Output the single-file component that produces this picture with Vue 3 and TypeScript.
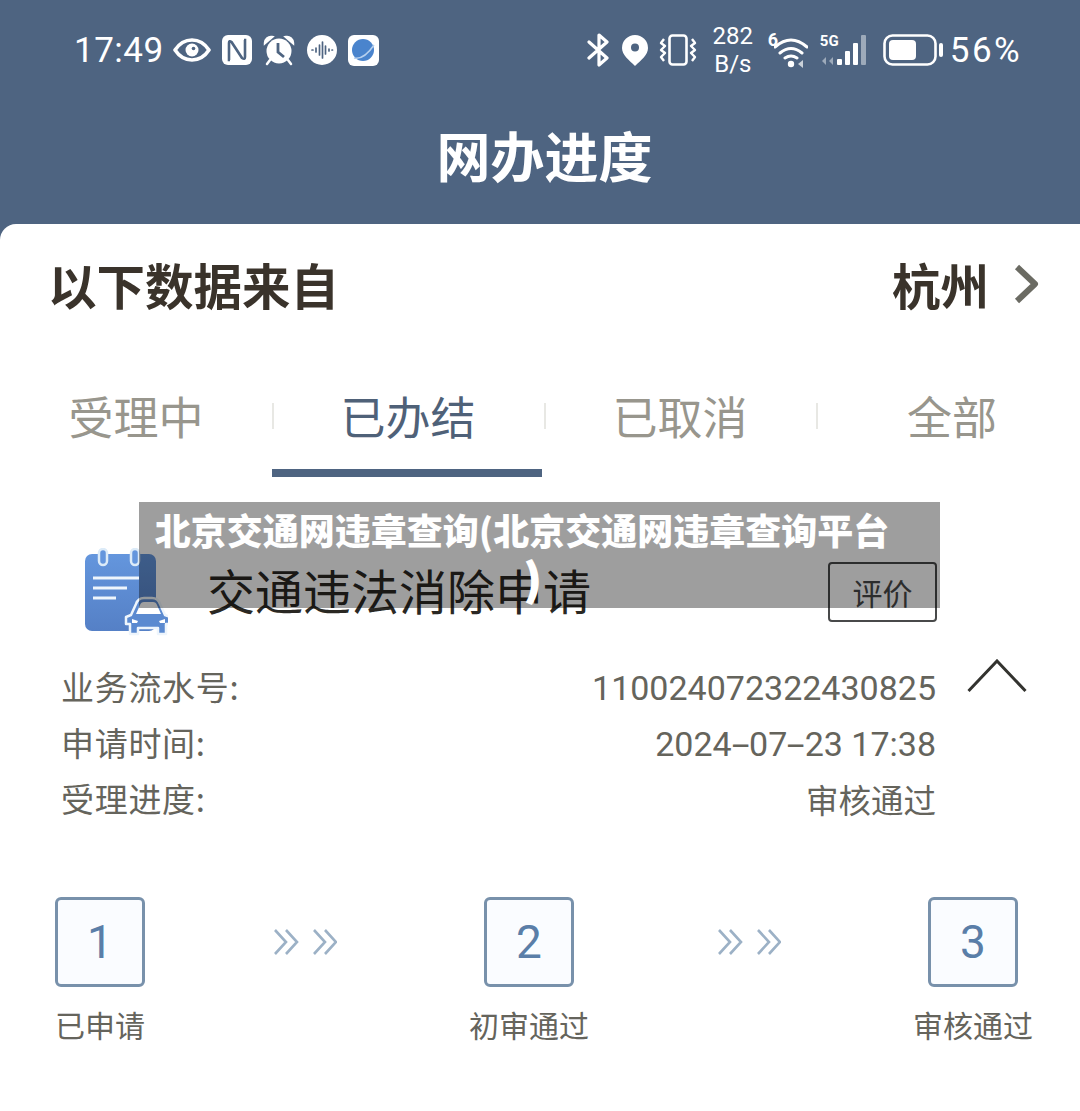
<script setup lang="ts">
const tabs = ['受理中', '已办结', '已取消', '全部']
const rows = [
  { label: '业务流水号:', value: '110024072322430825' },
  { label: '申请时间:', value: '2024-07-23 17:38' },
  { label: '受理进度:', value: '审核通过' },
]
</script>

<template>
  <div class="page">
    <header class="head">
      <div class="status">
        <div class="status-left">
          <span class="time">17:49</span>
          <svg class="i-eye" viewBox="0 0 38 24"><path d="M2 12C7 4.500 13 2 19 2s12 2.500 17 10c-5 7.500-11 10-17 10S7 19.500 2 12Z" fill="none" stroke="#fff" stroke-width="3.600" stroke-linejoin="round"/><circle cx="19" cy="12" r="6.500" fill="#fff"/><circle cx="20.500" cy="10.500" r="1.800" fill="#4e6481"/></svg>
          <svg class="i-nfc" viewBox="0 0 30 30"><rect width="30" height="30" rx="6" fill="#fff"/><path d="M8 25H7V8q0-3 2.500-1L20 23q3 2 3-1V5h-1" fill="none" stroke="#4e6481" stroke-width="2.600"/></svg>
          <svg class="i-alarm" viewBox="0 0 32 32"><circle cx="16" cy="17" r="12.500" fill="#fff"/><path d="M2 9a6 6 0 0 1 7-6zM30 9a6 6 0 0 0-7-6zM7 26l-3 4M25 26l3 4" fill="#fff" stroke="#fff" stroke-width="2.500" stroke-linecap="round"/><path d="M15 9v9l6 5" fill="none" stroke="#4e6481" stroke-width="2.800"/></svg>
          <svg class="i-sound" viewBox="0 0 30 30"><circle cx="15" cy="15" r="15" fill="#fff"/><path d="M5 15h1M9 13v4M12.500 10v10M15.500 7v16M18.500 11v8M22 14v2M25 15h.500" stroke="#4e6481" stroke-width="1.700" stroke-linecap="round"/></svg>
          <svg class="i-browser" viewBox="0 0 31 31"><rect width="31" height="31" rx="6" fill="#fff"/><circle cx="15" cy="15" r="11" fill="#4a84cd"/><path d="M6 23q10 2 20-13" fill="none" stroke="#b7d0ee" stroke-width="1.500"/></svg>
        </div>
        <div class="status-right">
          <svg class="i-bt" viewBox="0 0 24 34"><path d="M2 9l18 16-8 7V2l8 7L2 25" fill="none" stroke="#fff" stroke-width="3.200" stroke-linecap="round" stroke-linejoin="round"/></svg>
          <svg class="i-pin" viewBox="0 0 28 32"><path d="M14 32C8 26 1 21 1 14a13 13 0 0 1 26 0c0 7-7 12-13 18Z" fill="#fff"/><circle cx="14" cy="13.500" r="4" fill="#4e6481"/></svg>
          <svg class="i-vib" viewBox="0 0 38 32"><rect x="10.500" y="1.500" width="17" height="29" rx="3" fill="none" stroke="#fff" stroke-width="2.600"/><path d="M5 5L2 9l4 3-4 4 4 3-4 4 3 4M33 5l3 4-4 3 4 4-4 3 4 4-3 4" fill="none" stroke="#fff" stroke-width="2.400" stroke-linejoin="round"/></svg>
          <div class="speed"><span>282</span><span>B/s</span></div>
          <div class="wifi">
            <span class="six">6</span>
            <svg viewBox="0 0 34 32"><path d="M1 11q16-14 32 0M6 17q11-9 22 0M11 22q6-4 12 0" fill="none" stroke="#fff" stroke-width="3" stroke-linecap="round"/><circle cx="17" cy="28" r="3.200" fill="#fff"/><path d="M24 28l5-4v8z" fill="#fff" opacity=".7"/></svg>
          </div>
          <div class="cell">
            <span class="five">5G</span>
            <svg viewBox="0 0 52 36"><path d="M2 29l4-4v8zM9 29l4-4v8z" fill="#fff" opacity=".45"/><rect x="17" y="27" width="5" height="6" rx="1" fill="#fff"/><rect x="25" y="19" width="5" height="14" rx="1" fill="#fff"/><rect x="33" y="11" width="5" height="22" rx="1" fill="#fff"/><rect x="41" y="3" width="5" height="30" rx="1" fill="#fff" opacity=".45"/></svg>
          </div>
          <svg class="i-bat" viewBox="0 0 60 32"><rect x="1.500" y="1.500" width="51" height="29" rx="8" fill="none" stroke="#fff" stroke-width="2.600"/><rect x="6" y="6" width="27" height="20" rx="4" fill="#fff"/><rect x="56" y="9" width="4" height="14" rx="2" fill="#fff"/></svg>
          <span class="pct">56%</span>
        </div>
      </div>
      <h1 class="head-title">网办进度</h1>
    </header>

    <main class="card">
      <div class="source">
        <span>以下数据来自</span>
        <div class="city">
          <span>杭州</span>
          <svg class="city-arrow" viewBox="0 0 26 42"><path d="M4 4l18 17L4 38" fill="none" stroke="#6b6b63" stroke-width="6" stroke-linejoin="round"/></svg>
        </div>
      </div>

      <nav class="tabs">
        <div v-for="(t, i) in tabs" :key="t" class="tab" :class="{ active: i === 1 }">{{ t }}</div>
      </nav>

      <section class="apply">
        <svg class="doc" viewBox="0 0 84 88">
          <defs>
            <linearGradient id="docFill" x1="0" y1="0" x2="0" y2="1"><stop offset="0" stop-color="#6496dd"/><stop offset="1" stop-color="#5580c6"/></linearGradient>
          </defs>
          <rect x="1" y="6" width="71" height="77" rx="7" fill="url(#docFill)"/>
          <rect x="15" y="1" width="8" height="16" rx="4" fill="#6496dd" stroke="#dcebf8" stroke-width="2.500"/>
          <rect x="47" y="1" width="8" height="16" rx="4" fill="#6496dd" stroke="#dcebf8" stroke-width="2.500"/>
          <path d="M9 30h46M9 40h34M9 50h23" stroke="#eef5fc" stroke-width="3"/>
          <path d="M46 86V76h-4v-7l5-2 5-11q2-6 8-6h8q6 0 8 6l5 11 5 2v7h-4v10h-8v-6H54v6z" fill="#5b8ad0" stroke="#eef5fc" stroke-width="2.500" stroke-linejoin="round"/>
          <path d="M52 66l4-9q1-3 4-3h9q3 0 4 3l4 9z" fill="#fff"/>
          <path d="M48 71l6 2-1 2h-5zM81 71l-6 2 1 2h5z" fill="#fff"/>
        </svg>
        <span class="apply-title">交通违法消除申请</span>
        <button class="rate" type="button">评价</button>
      </section>

      <section class="details">
        <div class="rows">
          <div v-for="r in rows" :key="r.label" class="row">
            <span class="key">{{ r.label }}</span>
            <span class="val">
              <template v-for="(part, p) in r.value.split('-')" :key="p"><span v-if="p" class="dash">-</span>{{ part }}</template>
            </span>
          </div>
        </div>
        <svg class="fold" viewBox="0 0 60 34"><path d="M1.500 32L30 2l28.500 30" fill="none" stroke="#33332f" stroke-width="3"/></svg>
      </section>

      <section class="steps">
        <div class="step">
          <div class="num">1</div>
          <span class="step-label">已申请</span>
        </div>
        <svg class="chev" viewBox="0 0 64 28"><path d="M2 2l11 12L2 26M13 2l11 12-11 12M41 2l11 12-11 12M52 2l11 12-11 12" fill="none" stroke="#9cb1c6" stroke-width="2.600"/></svg>
        <div class="step">
          <div class="num">2</div>
          <span class="step-label">初审通过</span>
        </div>
        <svg class="chev" viewBox="0 0 64 28"><path d="M2 2l11 12L2 26M13 2l11 12-11 12M41 2l11 12-11 12M52 2l11 12-11 12" fill="none" stroke="#9cb1c6" stroke-width="2.600"/></svg>
        <div class="step">
          <div class="num">3</div>
          <span class="step-label">审核通过</span>
        </div>
      </section>
    </main>

    <div class="overlay">
      <p class="overlay-text">北京交通网违章查询(北京交通网违章查询平台<br /><span class="paren">)</span></p>
    </div>
  </div>
</template>

<style>
html, body { margin: 0; background: #fff; }
</style>

<style scoped>
.page {
  position: relative;
  width: 1080px;
  height: 1111px;
  overflow: hidden;
  background: #4e6481;
  font-family: "Noto Sans CJK SC", "Noto Sans", sans-serif;
}
.head { height: 224px; color: #fff; display: flex; flex-direction: column; }
.status {
  display: flex;
  justify-content: space-between;
  align-items: center;
  height: 50px;
  margin-top: 25px;
  padding: 0 60px 0 74px;
}
.status-left, .status-right { display: flex; align-items: center; }
.time, .pct { font-family: Roboto, sans-serif; font-size: 35px; line-height: 1; }
.time { letter-spacing: .5px; margin-right: 9px; }
.pct { letter-spacing: 2.400px; margin-right: -2px; }
.i-eye { width: 38px; height: 24px; margin-right: 11px; }
.i-nfc { width: 30px; height: 30px; margin-right: 11px; }
.i-alarm { width: 32px; height: 32px; margin-right: 12px; }
.i-sound { width: 30px; height: 30px; margin-right: 11px; }
.i-browser { width: 31px; height: 31px; }
.i-bt { width: 24px; height: 34px; margin-right: 10px; }
.i-pin { width: 28px; height: 32px; margin-right: 10px; }
.i-vib { width: 38px; height: 32px; margin-right: 16px; }
.speed { display: flex; flex-direction: column; align-items: center; width: 40px; margin-right: 15px; font-family: Roboto, sans-serif; font-size: 24px; line-height: 28px; }
.wifi { position: relative; width: 40px; height: 36px; margin-right: 12px; display: flex; justify-content: flex-end; }
.wifi svg { width: 34px; height: 32px; margin-top: 4px; }
.six { position: absolute; left: 0; top: -3px; font-family: Roboto, sans-serif; font-weight: 700; font-size: 18px; }
.cell { position: relative; width: 52px; height: 36px; margin-right: 11px; }
.cell svg { width: 52px; height: 36px; display: block; }
.five { position: absolute; left: 0; top: 0; font-family: Roboto, sans-serif; font-weight: 700; font-size: 15px; }
.i-bat { width: 60px; height: 32px; margin-right: 7px; }
.head-title { margin: 42px 0 0; padding-left: 9px; text-align: center; font-size: 54px; line-height: 76px; font-weight: 700; }

.card { height: 887px; background: #fff; border-radius: 16px 0 0 0; display: flex; flex-direction: column; }
.source {
  display: flex;
  justify-content: space-between;
  align-items: center;
  height: 64px;
  margin-top: 28px;
  padding: 0 41px 0 48px;
  font-size: 48.500px;
  font-weight: 700;
  color: #3a332b;
}
.city { display: flex; align-items: center; gap: 24px; }
.city-arrow { width: 26px; height: 42px; }
.tabs { display: grid; grid-template-columns: repeat(4, 272px); height: 176px; margin-top: 56px; width: 1088px; }
.tab {
  position: relative;
  display: flex;
  align-items: flex-start;
  justify-content: center;
  padding-top: 11px;
  font-size: 45px;
  line-height: 66px;
  color: #98968d;
}
.tab + .tab::before {
  content: "";
  position: absolute;
  left: 0;
  top: 31px;
  width: 2px;
  height: 26px;
  background: #e8e8e4;
}
.tab.active { color: #4f6178; }
.tab.active::after {
  content: "";
  position: absolute;
  left: 0;
  right: 2px;
  top: 97px;
  height: 8px;
  background: #4e6481;
}
.apply { display: flex; align-items: center; height: 88px; padding: 0 143px 0 84px; }
.doc { width: 84px; height: 88px; flex: none; }
.apply-title { margin-left: 39px; padding-bottom: 6px; font-size: 48px; color: #2a2823; line-height: 60px; flex: 1; }
.rate {
  width: 109px;
  height: 60px;
  border: 2px solid #48494a;
  border-radius: 4px;
  background: transparent;
  color: #48494a;
  font: 400 30px "Noto Sans CJK SC", sans-serif;
  padding: 0;
}
.details { display: flex; margin-top: 22px; padding: 0 52px 0 61px; }
.rows { width: 875px; display: flex; flex-direction: column; }
.row { display: flex; justify-content: space-between; align-items: center; height: 56px; font-size: 33px; color: #65645c; }
.key { letter-spacing: .7px; }
.val { margin-top: 4px; font-family: Roboto, "Noto Sans CJK SC", sans-serif; font-size: 34px; }
.row:last-child .val { margin-top: 0; font-size: 32.500px; font-family: "Noto Sans CJK SC", sans-serif; }
.dash { display: inline-block; margin: 0 4px; transform: scaleX(1.900); }
.fold { width: 60px; height: 34px; margin: 1px 0 0 31px; }
.steps { display: flex; justify-content: space-between; align-items: flex-start; margin-top: 71px; padding: 0 47px 0 55px; }
.step { display: flex; flex-direction: column; align-items: center; gap: 17px; }
.num {
  box-sizing: border-box;
  width: 90px;
  height: 90px;
  border: 3px solid #7891ab;
  border-radius: 6px;
  background: #fafcff;
  color: #5a7ea8;
  font-family: Roboto, sans-serif;
  font-size: 46px;
  display: flex;
  align-items: center;
  justify-content: center;
}
.step-label { font-size: 30px; line-height: 40px; color: #65645c; white-space: nowrap; }
.chev { width: 64px; height: 28px; margin: 31px 4px 0 0; }
.overlay {
  position: absolute;
  left: 139px;
  top: 502px;
  width: 801px;
  height: 106px;
  background: rgba(0, 0, 0, .38);
}
.overlay-text {
  margin: 6px 0 0 13px;
  width: 740px;
  text-align: center;
  color: #fff;
  font-size: 36px;
  font-weight: 900;
  line-height: 43px;
}
.paren {
  display: inline-block;
  margin: 4px 0 0 22px;
  font-size: 42px;
  line-height: 43px;
  -webkit-text-stroke: 1.500px #fff;
}
</style>
